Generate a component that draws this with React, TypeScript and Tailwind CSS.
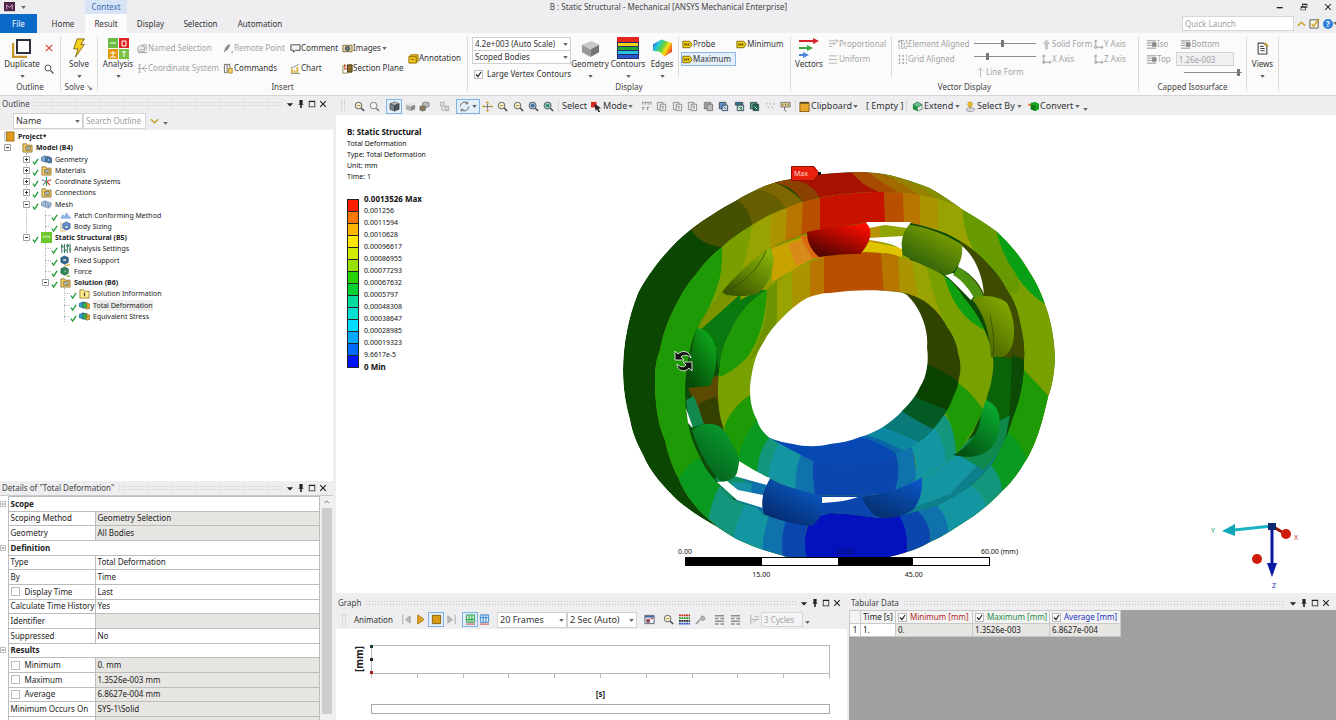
import { useState } from "react";
import type { ReactNode } from "react";
import clsx from "clsx";

const glyphs: Record<string, ReactNode> = {
  namedSelection: (
    <g fill="none" stroke="#9a9a9a">
      <path d="M1 10.5h10M1 5l4-3 3 2v5H1z" />
      <path d="M5 5l2-3h3v6M3 7h4" />
    </g>
  ),
  coordinate: (
    <g stroke="#a8a8a8" fill="none">
      <path d="M3 1v10M1 6h10M6 6l4-4M6 6l4 4" />
      <path d="M1 2h3M1 10h3" strokeDasharray="1 1" />
    </g>
  ),
  remote: (
    <g>
      <path d="M2 9c-1-4 2-7 6-8-1 4-2 7-6 8z" fill="#9c9c9c" />
      <path d="M1 10l6-8" stroke="#777" fill="none" />
      <circle cx="10" cy="10" r="1" fill="#999" />
    </g>
  ),
  commands: (
    <g fill="none" stroke="#666">
      <path d="M1.5 1.5h3v9h-3zM4.5 1.5h3v4" />
      <path d="M6 6h4v5H6z" fill="#f3d773" stroke="#b08b22" />
    </g>
  ),
  comment: <path d="M1 2h10v6H6l-2 2V8H1z" fill="#f4f4f4" stroke="#444" />,
  chart: (
    <g>
      <path d="M1 11V6h2v5zM4 11V8h2v3zM7 11V4h2v7z" fill="#d9b23a" />
      <path d="M1 5l4-1 5-3M1 11.5h10" stroke="#888" fill="none" />
    </g>
  ),
  images: (
    <g>
      <path d="M1 2.5h10v7H1z" fill="#e9dcb0" stroke="#7d6c39" />
      <circle cx="6" cy="6" r="2.4" fill="#6d7a86" stroke="#444" />
    </g>
  ),
  section: (
    <g>
      <path d="M1 3h5v8H1z" fill="#fff" stroke="#884" />
      <path d="M6 2h5v8H6z" fill="#8a6b2c" stroke="#4a3a14" />
      <path d="M3 1v6l3-1" fill="none" stroke="#c22" />
    </g>
  ),
  annotation: (
    <g>
      <path d="M1 4l2-2h8v7l-2 2H1z" fill="#f2c51d" stroke="#8a6a00" />
      <path d="M1 4h8v7M3 7h4" fill="none" stroke="#8a6a00" />
    </g>
  ),
  probe: (
    <g>
      <path d="M1 2.5h7.5l2.5 3.5-2.5 3.5H1z" fill="#f6d313" stroke="#7a6200" />
      <path d="M2.5 6h5.5" stroke="#5f4d00" strokeWidth="2" strokeDasharray="1.5 .5" />
    </g>
  ),
  proportional: <path d="M1 2h10M1 5h7M1 8h4M9 .5l2 1.5-2 1.5M6 4l2 1-2 1" stroke="#b0b0b0" fill="none" />,
  uniform: <path d="M1 2h9M1 6h9M1 10h9" stroke="#b0b0b0" />,
  aligned: (
    <g stroke="#8d8d8d" fill="none">
      <path d="M2 2h9v8H2z" strokeDasharray="2 1.5" />
      <path d="M2 2l5 4M5 1v9M8 4v6" strokeDasharray="2 1" />
    </g>
  ),
  grid: <path d="M2 2h9M2 6h9M2 10h9" stroke="#999" strokeWidth="2" strokeDasharray="1.5 2.5" />,
  solidForm: <path d="M6 1l3 4H7v6H5V5H3z" fill="#d2d2d2" stroke="#bbb" />,
  lineForm: <path d="M6 11V1M3 4l3-3 3 3" stroke="#b8b8b8" fill="none" />,
  axis: (
    <g stroke="#999" fill="none">
      <path d="M3 1v8h8M1.5 3L3 1l1.5 2M9 7.5L11 9 9 10.5" />
      <circle cx="3" cy="9" r="1.3" fill="#ddd" />
    </g>
  ),
  iso: (
    <g stroke="#8a8a8a" fill="none">
      <path d="M1 2h10M1 4.5h5M1 7h5M1 10h10" />
      <path d="M7 4h4v4H7z" fill="#8a8a8a" />
    </g>
  ),
  views: (
    <g fill="none" stroke="#444">
      <path d="M2 1h5l3 3v7H2z" fill="#fff" />
      <path d="M4 4h3M4 6h4M4 8h4" />
      <path d="M8 1l3 3" stroke="#cda434" strokeWidth="2" />
    </g>
  ),
  zoom: (
    <g fill="none">
      <circle cx="5" cy="5" r="3.6" fill="#f7f1d8" stroke="#555" />
      <path d="M3 5h4" stroke="#b48a1b" />
      <path d="M8 8l3 3" stroke="#444" strokeWidth="1.6" />
    </g>
  ),
  zoomPlain: (
    <g fill="none" stroke="#777">
      <circle cx="5" cy="5" r="3.6" fill="#f4f4f4" />
      <path d="M8 8l3 3" strokeWidth="1.5" />
    </g>
  ),
  zoomBlue: (
    <g fill="none">
      <circle cx="5" cy="5" r="3.8" fill="#a9bed0" stroke="#4b5560" />
      <path d="M3 4l2-1 2 1v2L5 7 3 6z" fill="#3d6f9e" />
      <path d="M8 8l3 3" stroke="#444" strokeWidth="1.6" />
    </g>
  ),
  zoomGreen: (
    <g fill="none">
      <circle cx="5" cy="5" r="3.8" fill="#a8cfc0" stroke="#4b5560" />
      <path d="M3 4l2-1 2 1v2L5 7 3 6z" fill="#2b8a78" />
      <path d="M8 8l3 3" stroke="#444" strokeWidth="1.6" />
    </g>
  ),
  cube: (
    <g stroke="#333" strokeWidth=".6">
      <path d="M1 3l5-2 5 2-5 2z" fill="#b9bec2" />
      <path d="M1 3l5 2v6L1 9z" fill="#7c8388" />
      <path d="M11 3L6 5v6l5-2z" fill="#4d5357" />
    </g>
  ),
  cubeGray: (
    <g>
      <path d="M1 4l5-2 5 2-5 2z" fill="#dedede" />
      <path d="M1 4l5 2v5L1 9z" fill="#b0b0b0" />
      <path d="M11 4L6 6v5l5-2z" fill="#8b8b8b" />
    </g>
  ),
  cubes: (
    <g stroke="#555" strokeWidth=".6">
      <path d="M4 2l3-1 4 1v4L8 7 4 6z" fill="#b9b9b9" />
      <path d="M1 6l3-1 3 1v4l-3 1-3-1z" fill="#8b7b55" />
    </g>
  ),
  copyGrid: (
    <g fill="#e4e4e4" stroke="#aaa">
      <path d="M1.5 1.5h4v4h-4zM6.5 5.5h4v5h-4z" />
      <path d="M8.5 6v5M3 6v4h3" fill="none" />
    </g>
  ),
  rotate: (
    <g fill="none" stroke="#7a7a7a" strokeWidth="1.2">
      <path d="M1.5 6A4.5 4.5 0 0 1 9 2.5M10.5 6A4.5 4.5 0 0 1 3 9.5" />
      <path d="M9.5.5v2.500H7M2.500 11.500V9H5" />
    </g>
  ),
  pan: (
    <g fill="#c79a1d">
      <path d="M6 0l2 2.500H4zM6 12l2-2.500H4zM0 6l2.500-2v4zM12 6L9.500 4v4z" />
      <path d="M5.500 3h1v6h-1zM3 5.500h6v1H3z" fill="#777" />
    </g>
  ),
  cursorRed: (
    <g>
      <path d="M0 1h6v6H0z" fill="#d9261c" />
      <path d="M4 3l7 5-3 .5L10 12 8 12 6.500 9 5 11z" fill="#222" />
    </g>
  ),
  filter: (
    <path
      d="M1 1.5h10M2 1v4M5 1v4M8 1v3M11 1v4M1 7h4M2 7v4M6 7h3M7 7v4"
      strokeDasharray="3 1"
      fill="none"
      stroke="#8f8f8f"
    />
  ),
  pick: (
    <g fill="#eee" stroke="#8a8a8a">
      <path d="M1.5 1.5h6v8h-6z" />
      <path d="M4.5 3.5h6v7h-6z" />
      <path d="M6 5l2 4M8 5v2" fill="none" />
    </g>
  ),
  pickGray: (
    <g fill="#a6a6a6" stroke="#777">
      <path d="M1.5 1.5h7v7h-7z" />
      <path d="M4.5 3.5h6v7h-6z" fill="#bcbcbc" />
    </g>
  ),
  pickBlue: (
    <g stroke="#3a4a5a">
      <path d="M1.5 1.5h7v7h-7z" fill="#5b94d0" />
      <path d="M4.5 4.5h6v6h-6z" fill="#d0e0ee" />
      <path d="M6 6l3 3" />
    </g>
  ),
  pickTeal: (
    <g stroke="#3a4a5a">
      <path d="M1.5 1.5h8v3h-8z" fill="#2f6f9c" />
      <path d="M3.5 4.5h7v6h-7z" fill="#cfe6d8" />
      <path d="M5 6l3 3M8 6v4" stroke="#18794e" />
    </g>
  ),
  pickGreen: (
    <g stroke="#3a4a4a">
      <path d="M1.5 1.5h7v7h-7z" fill="#4f9e88" />
      <path d="M4.5 3.5h6v7h-6z" fill="#17694d" />
      <path d="M6 6l3 3" stroke="#cfe" />
    </g>
  ),
  dots: <path d="M1 3h10M3 7h7" stroke="#c2c2c2" strokeWidth="2" strokeDasharray="1.5 2.5" />,
  tagFlag: (
    <g>
      <path d="M1 1.5h10v5H1z" fill="#e3cf84" stroke="#777" />
      <path d="M5 6.5v3l2 2M3 3v2M6 3v2M9 3v2" stroke="#555" fill="none" />
    </g>
  ),
  clipboard: (
    <g>
      <path d="M1 1.5h10v10H1z" fill="#e7a92c" stroke="#8c5a10" />
      <path d="M1.5 1h9v2h-9z" fill="#5a4a2a" />
    </g>
  ),
  extend: (
    <g>
      <path d="M1 4l5-3 5 3-5 3z" fill="#6ac28c" stroke="#1c5c39" strokeWidth=".7" />
      <path d="M1 4l5 3v4L1 9z" fill="#1c8c3f" />
      <path d="M11 4L6 7v4l5-2z" fill="#e5efe8" stroke="#2f6d49" strokeWidth=".7" />
    </g>
  ),
  selectBy: (
    <g>
      <path d="M1 9l4-3 6 3-3 2.5H3z" fill="#d5d8dc" stroke="#888" strokeWidth=".7" />
      <circle cx="5.5" cy="3.5" r="2.5" fill="#f2c22c" stroke="#b8860b" strokeWidth=".7" />
      <path d="M5.5 6v3" stroke="#b8860b" />
    </g>
  ),
  convert: (
    <g>
      <path d="M0 3h6v2H0z" fill="#e07b2a" />
      <path d="M3 2l5-1 4 2v6l-4 2-5-2z" fill="#17a321" />
      <path d="M3 4l5 1v6l-5-2z" fill="#0d7a17" />
    </g>
  ),
  folder: (
    <g stroke="#7d6323" strokeWidth=".8">
      <path d="M1 2h4l1 1.5h5V11H1z" fill="#f3cf62" />
      <path d="M4 5h5v4H4z" fill="#b8c8d8" />
      <path d="M5 6l3 3" />
    </g>
  ),
  folderInfo: (
    <g stroke="#8b7020" strokeWidth=".8">
      <path d="M1 2h4l1 1.5h5V11H1z" fill="#ffe98a" />
      <path d="M6 5v4" stroke="#333" strokeWidth="1.2" />
    </g>
  ),
  book: (
    <g>
      <path d="M1 1h2v10H1z" fill="#fff" stroke="#777" strokeWidth=".6" />
      <path d="M3 1h8v10H3z" fill="#e09a1a" stroke="#93600c" strokeWidth=".8" />
    </g>
  ),
  bodyBlue: (
    <g stroke="#33587e" strokeWidth=".7">
      <path d="M0 4l4-2 4 1v4L5 9 0 7z" fill="#7fa9d4" />
      <path d="M5 4l4-1 3 2v4l-3 1-4-2z" fill="#4678ae" />
      <circle cx="8.5" cy="6.5" r="1.3" fill="#d8e6f2" />
    </g>
  ),
  bodyMesh: (
    <g stroke="#5a78a0" strokeWidth=".6">
      <path d="M0 4l4-2 7 2v4L8 10 0 7z" fill="#b7cce6" />
      <path d="M2 3l6 2v5M5 2.5v6M0 5.5l8 2 3-2" fill="none" />
    </g>
  ),
  axesStar: (
    <g strokeWidth="1.2">
      <path d="M6 6V1" stroke="#1c9e96" />
      <path d="M6 6l5-2M6 6l4 4" stroke="#d23b2c" />
      <path d="M6 6L1 4M6 6l-4 4" stroke="#6a7fa0" />
      <path d="M6 6v5" stroke="#2aa43b" />
    </g>
  ),
  patch: <path d="M1 9l2-4 2 2 2-4 2 3 3 3z" fill="#8fb6ee" stroke="#6c95d8" strokeWidth=".6" />,
  sizing: (
    <g stroke="#2b4c82" strokeWidth=".7">
      <path d="M3 3l4-2 4 2v5L7 10 3 8z" fill="#6c93d6" />
      <path d="M1 1v10h5" fill="none" stroke="#c9991d" />
      <path d="M5 5h4v3H5z" fill="#dfe8fa" />
    </g>
  ),
  structural: (
    <g>
      <path d="M0 0h12v12H0z" fill="#6cc72b" />
      <path d="M2 5h8" stroke="#d9f2c2" strokeWidth="2" strokeDasharray="2 1" />
    </g>
  ),
  settings: (
    <g stroke="#355" fill="none">
      <path d="M2 1v10M5 1v10M8 1v10M11 1v10" />
      <path d="M1 4h3M4 8h3M7 3h3M10 7h2" stroke="#2a9455" strokeWidth="2" />
    </g>
  ),
  support: (
    <g stroke="#1f3d55" strokeWidth=".7">
      <path d="M1 3l4-2 4 2v5L5 10 1 8z" fill="#2b6da3" />
      <path d="M3 4h4v3H3z" fill="#cfe0ee" />
      <path d="M5 11.5l6-1" stroke="#d2a622" strokeWidth="1.2" />
    </g>
  ),
  force: (
    <g stroke="#1f4d35" strokeWidth=".7">
      <path d="M1 3l4-2 4 2v5L5 10 1 8z" fill="#2c8c5a" />
      <path d="M4 4l3 1v3" fill="#d6efe0" />
      <path d="M7 11h4" stroke="#4cb31e" strokeWidth="1.2" />
    </g>
  ),
  result: (
    <g stroke="#27506a" strokeWidth=".6">
      <path d="M0 4l4-2 4 1v4L5 9 0 7z" fill="#2aa0d0" />
      <path d="M5 3l4 0 3 2v4l-3 1-4-2z" fill="#f0a321" />
      <path d="M4 4l3-1 2 3-2 3-3-1z" fill="#35b53a" />
    </g>
  ),
  first: <path d="M2 1v10M10 2L5 6l5 4z" fill="#b9b9b9" stroke="#a5a5a5" />,
  play: <path d="M3 1l7 5-7 5z" fill="#e3a41b" stroke="#a9770c" />,
  stop: <path d="M1.5 1.5h9v9h-9z" fill="#d89c16" stroke="#85600c" />,
  last: <path d="M2 2l5 4-5 4zM10 1v10" fill="#b9b9b9" stroke="#a5a5a5" />,
  distributed: (
    <g fill="none">
      <path d="M1.5 1h9v8h-9z" fill="#c9f0cd" stroke="#2a9a4c" />
      <path d="M4.5 1v8M7.5 1v8M1 6h9" stroke="#2a9a4c" />
      <path d="M1 11h10" stroke="#c33" />
    </g>
  ),
  resultSets: (
    <g fill="none">
      <path d="M1.5 1h9v8h-9z" fill="#d8ebfa" stroke="#3a86c8" />
      <path d="M4.5 1v8M7.5 1v8M1 4h9" stroke="#3a86c8" />
      <path d="M1 11h10" stroke="#c33" />
    </g>
  ),
  exportVideo: (
    <g>
      <path d="M1 1.5h10v9H1z" fill="#f2f5f8" stroke="#4b5a72" />
      <path d="M1 2h10v2H1z" fill="#4b6ea5" />
      <path d="M3 6h3v3H3zM7 5h3" fill="#4b6ea5" stroke="#b33" />
    </g>
  ),
  palette: (
    <g strokeWidth="2" strokeDasharray="2 .6">
      <path d="M0 1.5h12" stroke="#c8241a" />
      <path d="M0 4.5h12" stroke="#2c9a2c" />
      <path d="M0 7.5h12" stroke="#222" />
      <path d="M0 10.5h12" stroke="#2b51c8" />
    </g>
  ),
  magicTool: <path d="M1 10l5-5 1-3 3 1 1 3-3 1-2-1-4 5z" fill="#b5b5b5" stroke="#999" />,
  rows: <path d="M1 2h10M1 5h4M7 5h4M1 8h10M1 11h4M7 11h4" stroke="#8d8d8d" strokeWidth="1.6" />,
  cycles: <path d="M2 1v10M2 6h9M6 3h5M5 9l3-3" stroke="#b0b0b0" fill="none" />,
  pencilNote: (
    <g fill="none">
      <path d="M1 2h9v9H1z" fill="#f8f3dc" stroke="#555" />
      <path d="M3 7l2 2 6-8" stroke="#c99d1c" strokeWidth="1.5" />
    </g>
  ),
};

const Icon = ({ name, className = "size-[11px]" }: { name: string; className?: string }) => (
  <svg viewBox="0 0 12 12" aria-hidden="true" className={clsx("shrink-0", className)}>
    {glyphs[name]}
  </svg>
);

const Caret = ({ className = "" }: { className?: string }) => (
  <svg viewBox="0 0 6 4" aria-hidden="true" className={clsx("h-[3px] w-[5px] shrink-0", className)}>
    <path d="M0 0h6L3 4z" fill="#666" />
  </svg>
);

const Divider = ({ className = "h-[54px]" }: { className?: string }) => (
  <div className={clsx("w-px shrink-0 bg-[#d9d9d9]", className)} />
);

const CheckBox = ({ checked = false }: { checked?: boolean }) => (
  <span className="relative flex shrink-0">
    <input
      type="checkbox"
      defaultChecked={checked}
      className="peer size-[9px] appearance-none border border-[#bdbdbd] bg-white"
    />
    <svg viewBox="0 0 9 9" className="pointer-events-none absolute inset-0 hidden size-[9px] peer-checked:block">
      <path d="M2 4.500l2 2 3-4.500" fill="none" stroke="#222" strokeWidth="1.200" />
    </svg>
  </span>
);

interface ToolProps {
  icon: string;
  label: string;
  disabled?: boolean;
  caret?: boolean;
  active?: boolean;
}

const Tool = ({ icon, label, disabled, caret, active }: ToolProps) => (
  <button
    type="button"
    disabled={disabled}
    className={clsx(
      "flex h-[14px] items-center whitespace-nowrap border pr-1 text-left",
      active ? "border-[#8db8e6] bg-[#e3effb]" : "border-transparent",
      disabled ? "text-[#a3a3a3]" : "text-[#333]"
    )}
  >
    <Icon name={icon} />
    {label}
    {caret && <Caret className="ml-px" />}
  </button>
);

interface BigToolProps {
  label: string;
  children: ReactNode;
  caret?: boolean;
  className?: string;
}

const BigTool = ({ label, children, caret = true, className = "w-9" }: BigToolProps) => (
  <button type="button" className={clsx("flex shrink-0 flex-col items-center text-[#333]", className)}>
    <span className="flex h-[22px] items-center">{children}</span>
    <span className="leading-[10px]">{label}</span>
    {caret && <Caret className="mt-1.5" />}
  </button>
);

const Group = ({ label, className, children }: { label: string; className: string; children: ReactNode }) => (
  <div className={clsx("flex shrink-0 flex-col", className)}>
    <div className="flex h-11 items-start">{children}</div>
    <div className="text-center leading-[12px] text-[#444]">{label}</div>
  </div>
);

const Dropdown = ({ label, options, className }: { label: string; options: string[]; className?: string }) => (
  <div className={clsx("relative border border-[#d0d0d0] bg-white", className)}>
    <select
      aria-label={label}
      className="block size-full appearance-none bg-transparent pl-0.5 pr-2 text-[#333] outline-none"
    >
      {options.map((o) => (
        <option key={o}>{o}</option>
      ))}
    </select>
    <Caret className="pointer-events-none absolute right-0.5 top-1/2 -mt-px" />
  </div>
);

const Slider = ({ label, value }: { label: string; value: number }) => (
  <input
    type="range"
    aria-label={label}
    defaultValue={value}
    className="h-[9px] w-full appearance-none bg-[linear-gradient(#8c8c8c,#8c8c8c)] bg-[length:100%_1px] bg-center bg-no-repeat [&::-webkit-slider-thumb]:h-[7px] [&::-webkit-slider-thumb]:w-[3px] [&::-webkit-slider-thumb]:appearance-none [&::-webkit-slider-thumb]:bg-[#777]"
  />
);

const TitleBar = () => (
  <header className="flex h-[14px] items-stretch text-[#444]">
    <div className="flex w-[85px] items-center gap-1.5 pl-1">
      <svg viewBox="0 0 12 12" className="size-[11px]" aria-hidden="true">
        <path d="M0 0h12v10H0z" fill="#4a2347" />
        <path d="M3 8V3l3 3 3-3v5" fill="none" stroke="#e3a9d8" />
      </svg>
      <Caret />
    </div>
    <div className="flex w-[42px] items-center justify-center bg-[#d6e4f5] text-[#3f6fb0]">Context</div>
    <h1 className="flex-1 pr-[66px] text-center leading-[13px]">
      B : Static Structural - Mechanical [ANSYS Mechanical Enterprise]
    </h1>
    <div className="flex w-[60px] items-center justify-between pr-1">
      {[
        ["Minimize", "M1 6h9v2H1z"],
        ["Restore", "M3 1h8v6H9v4H1V5h2zM4 5h5v1h1V3H4zM2 7h6v3H2z"],
        ["Close", "M1 2l1-1 4 4 4-4 1 1-4 4 4 4-1 1-4-4-4 4-1-1 4-4z"],
      ].map(([name, d]) => (
        <button key={name} type="button" aria-label={name}>
          <svg viewBox="0 0 12 12" className="size-2">
            <path d={d} fill="#222" fillRule="evenodd" />
          </svg>
        </button>
      ))}
    </div>
  </header>
);

const tabs = [
  { name: "Home", width: "w-[48px] pl-1" },
  { name: "Result", width: "w-[42px]" },
  { name: "Display", width: "w-[47px]" },
  { name: "Selection", width: "w-[53px]" },
  { name: "Automation", width: "w-[66px]" },
];

const TabBar = () => {
  const [current, setCurrent] = useState("Result");
  return (
    <nav className="flex h-[19px] items-stretch text-[#333]">
      <button type="button" className="w-[37px] bg-[#0b6ac8] text-white">
        File
      </button>
      {tabs.map((tab) => (
        <button
          key={tab.name}
          type="button"
          onClick={() => setCurrent(tab.name)}
          className={clsx("text-center", tab.width, current === tab.name && "bg-[#fbfbfb]")}
        >
          {tab.name}
        </button>
      ))}
      <div className="ml-auto flex items-center gap-[3px]">
        <input
          aria-label="Quick Launch"
          placeholder="Quick Launch"
          className="h-[15px] w-[112px] border border-[#d6d6d6] bg-white pl-0.5 outline-none placeholder:text-[#a0a0a0]"
        />
        <button type="button" aria-label="Collapse ribbon">
          <svg viewBox="0 0 10 6" className="h-[6px] w-[9px]">
            <path d="M1 5l4-4 4 4" fill="none" stroke="#c9a227" strokeWidth="1.600" />
          </svg>
        </button>
        <button type="button" aria-label="Options">
          <Icon name="pencilNote" />
        </button>
        <button type="button" aria-label="Help" className="flex items-center">
          <span className="size-[10px] rounded-full bg-[#2f7fd6] text-center font-bold leading-[10px] text-white">?</span>
          <Caret className="-mr-0.5" />
        </button>
      </div>
    </nav>
  );
};

const Ribbon = () => (
  <section className="flex h-[63px] items-start border-b border-[#d5d5d5] bg-[#fbfbfb] pt-1">
    <Group label="Outline" className="w-[60px]">
      <div className="pl-1">
        <BigTool label="Duplicate">
          <svg viewBox="0 0 20 20" className="size-5">
            <path d="M1 5v14h14" fill="none" stroke="#c9962b" strokeWidth="2.500" />
            <path d="M5 2h13v13H5z" fill="#fff" stroke="#2d2f3a" strokeWidth="2" />
          </svg>
        </BigTool>
      </div>
      <div className="flex flex-col items-center gap-3 pl-1 pt-[7px]">
        <button type="button" aria-label="Delete">
          <svg viewBox="0 0 10 10" className="size-2">
            <path d="M1 1l8 8M9 1L1 9" stroke="#d8412f" strokeWidth="1.500" />
          </svg>
        </button>
        <button type="button" aria-label="Find">
          <svg viewBox="0 0 10 10" className="size-[10px]">
            <circle cx="4" cy="4" r="3" fill="none" stroke="#555" />
            <path d="M6.500 6.500l3 3" stroke="#555" strokeWidth="1.300" />
          </svg>
        </button>
      </div>
    </Group>
    <Divider />
    <Group label="Solve ↘" className="w-9">
      <BigTool label="Solve">
        <svg viewBox="0 0 16 22" className="h-5 w-4">
          <path d="M6 1h8l-4 6h4L4 21l3-9H2z" fill="#f5cd1b" stroke="#7e6a12" />
        </svg>
      </BigTool>
    </Group>
    <Divider />
    <Group label="Insert" className="w-[369px]">
      <div className="w-[38px] pl-0.5">
        <BigTool label="Analysis">
          <svg viewBox="0 0 21 21" className="size-[21px]">
            <path d="M0 0h10v10H0z" fill="#6cbb45" />
            <path d="M11 0h10v10H11z" fill="#df2320" />
            <path d="M0 11h10v10H0z" fill="#e3970f" />
            <path d="M11 11h10v10H11z" fill="#7cc142" />
            <path d="M2 5h6M14 3h4v5h-4zM2 15h6M5 13v6M2 19h6M16 13v6M14 14h4" fill="none" stroke="#fff" />
          </svg>
        </BigTool>
      </div>
      <div className="flex w-[86px] flex-col gap-1.5 pt-1">
        <Tool icon="namedSelection" label="Named Selection" disabled />
        <Tool icon="coordinate" label="Coordinate System" disabled />
      </div>
      <div className="flex w-[67px] flex-col gap-1.5 pt-1">
        <Tool icon="remote" label="Remote Point" disabled />
        <Tool icon="commands" label="Commands" />
      </div>
      <div className="flex w-[52px] flex-col gap-1.5 pt-1">
        <Tool icon="comment" label="Comment" />
        <Tool icon="chart" label="Chart" />
      </div>
      <div className="flex w-[66px] flex-col gap-1.5 pt-1">
        <Tool icon="images" label="Images" caret />
        <Tool icon="section" label="Section Plane" />
      </div>
      <div className="pt-[14px]">
        <Tool icon="annotation" label="Annotation" />
      </div>
    </Group>
    <Divider />
    <Group label="Display" className="w-[322px]">
      <div className="flex w-[103px] shrink-0 flex-col pl-1">
        <Dropdown label="Scale" options={["4.2e+003 (Auto Scale)"]} className="h-[14px]" />
        <Dropdown label="Geometry scope" options={["Scoped Bodies"]} className="-mt-px h-[14px]" />
        <label className="mt-1 flex items-center gap-1 whitespace-nowrap pl-0.5 leading-[12px] text-[#333]">
          <CheckBox checked />
          Large Vertex Contours
        </label>
      </div>
      <BigTool label="Geometry" className="w-[38px]">
        <svg viewBox="0 0 20 20" className="size-[19px]">
          <path d="M1 6l10-4 8 4-9 5z" fill="#c9c9c9" />
          <path d="M1 6l9 5v8L1 14z" fill="#989898" />
          <path d="M19 6l-9 5v8l9-5z" fill="#757575" />
        </svg>
      </BigTool>
      <BigTool label="Contours" className="w-[38px]">
        <svg viewBox="0 0 22 22" className="size-[22px]">
          <path d="M0 0h22v22H0z" fill="#222d70" />
          <path d="M0 0h22v5H0z" fill="#e0281c" />
          <path d="M1 6h20v3H1z" fill="#f5d313" />
          <path d="M1 10h20v3H1z" fill="#24a52a" />
          <path d="M1 14h20v3H1z" fill="#25c2dc" />
          <path d="M1 18h20v3H1z" fill="#2d55c8" />
        </svg>
      </BigTool>
      <BigTool label="Edges" className="w-[30px]">
        <svg viewBox="0 0 22 20" className="h-5 w-[21px]">
          <defs>
            <linearGradient id="edges" x1="0" y1=".2" x2="1" y2=".7">
              <stop offset="0" stopColor="#2a62e0" />
              <stop offset=".25" stopColor="#25c8d8" />
              <stop offset=".5" stopColor="#5fd23a" />
              <stop offset=".7" stopColor="#f7e017" />
              <stop offset="1" stopColor="#ec2b1c" />
            </linearGradient>
          </defs>
          <path d="M1 6l9-5 11 4v9l-8 5L8 14l-7-1z" fill="url(#edges)" />
        </svg>
      </BigTool>
      <Divider className="ml-px h-10" />
      <div className="flex flex-col items-start gap-px pl-0.5">
        <div className="flex gap-[15px]">
          <Tool icon="probe" label="Probe" />
          <Tool icon="probe" label="Minimum" />
        </div>
        <Tool icon="probe" label="Maximum" active />
      </div>
    </Group>
    <Divider />
    <Group label="Vector Display" className="w-[347px]">
      <BigTool label="Vectors" caret={false}>
        <svg viewBox="0 0 20 20" className="size-5">
          <path d="M0 2h14V0l6 3-6 3V4H0z" fill="#d8232c" />
          <path d="M0 9h8V7l6 3-6 3v-2H0z" fill="#35a843" />
          <path d="M0 16h4v-2l6 3-6 3v-2H0z" fill="#4c86dc" />
        </svg>
      </BigTool>
      <div className="flex w-16 flex-col gap-px">
        <Tool icon="proportional" label="Proportional" disabled />
        <Tool icon="uniform" label="Uniform" disabled />
      </div>
      <Divider className="h-10" />
      <div className="flex w-[82px] flex-col gap-px pl-1">
        <Tool icon="aligned" label="Element Aligned" disabled />
        <Tool icon="grid" label="Grid Aligned" disabled />
      </div>
      <div className="flex w-[62px] flex-col gap-1 pt-0.5">
        <Slider label="Vector length" value={46} />
        <Slider label="Vector density" value={20} />
        <Tool icon="lineForm" label="Line Form" disabled />
      </div>
      <div className="flex w-14 flex-col gap-px pl-1">
        <Tool icon="solidForm" label="Solid Form" disabled />
        <Tool icon="axis" label="X Axis" disabled />
      </div>
      <div className="flex flex-col gap-px">
        <Tool icon="axis" label="Y Axis" disabled />
        <Tool icon="axis" label="Z Axis" disabled />
      </div>
    </Group>
    <Divider />
    <Group label="Capped Isosurface" className="w-[107px]">
      <div className="flex w-full flex-col pl-1.5">
        <div className="flex gap-1.5">
          <Tool icon="iso" label="Iso" disabled />
          <Tool icon="iso" label="Bottom" disabled />
        </div>
        <div className="mt-px flex items-center">
          <Tool icon="iso" label="Top" disabled />
          <input
            aria-label="Isosurface value"
            defaultValue="1.26e-003"
            disabled
            className="h-[14px] w-[58px] border border-[#d2d2d2] bg-[#f0f0f2] pl-0.5 text-[#a3a3a3]"
          />
        </div>
        <div className="flex w-[62px] self-end pr-1 pt-0.5">
          <Slider label="Isosurface" value={97} />
        </div>
      </div>
    </Group>
    <Divider />
    <div className="flex w-[31px] justify-center">
      <BigTool label="Views">
        <Icon name="views" className="size-[13px]" />
      </BigTool>
    </div>
    <Divider />
  </section>
);

const PanelHeader = ({ title }: { title: string }) => (
  <div className="flex h-[14px] shrink-0 items-center gap-1 bg-[#eeeef1] pl-0.5 pr-1.5 text-[#444]">
    <h2 className="whitespace-nowrap">{title}</h2>
    <div className="h-1.5 min-w-0 flex-1 bg-[radial-gradient(#c4c4c8_1px,transparent_1px)] bg-[length:3px_3px]" />
    <div className="flex items-center gap-[3px]">
      {[
        ["Menu", "M1 4h8L5 8z"],
        ["Pin", "M3 0h4v5h1v1H6v4H4V6H2V5h1z"],
        ["Maximize", "M1 1h8v8H1zM2 2.500v5.500h6V2.500z"],
        ["Close panel", "M1 2l1-1 3 3 3-3 1 1-3 3 3 3-1 1-3-3-3 3-1-1 3-3z"],
      ].map(([name, d]) => (
        <button key={name} type="button" aria-label={name}>
          <svg viewBox="0 0 10 10" className="size-2">
            <path d={d} fill="#222" fillRule="evenodd" />
          </svg>
        </button>
      ))}
    </div>
  </div>
);

interface TreeNode {
  label: string;
  level: number;
  icon: string;
  guides: number[];
  expander?: "+" | "-";
  bold?: boolean;
  selected?: boolean;
}

const tree: TreeNode[] = [
  { label: "Project*", level: 0, icon: "book", guides: [], bold: true },
  { label: "Model (B4)", level: 1, icon: "folder", guides: [], expander: "-", bold: true },
  { label: "Geometry", level: 2, icon: "bodyBlue", guides: [2], expander: "+" },
  { label: "Materials", level: 2, icon: "folder", guides: [2], expander: "+" },
  { label: "Coordinate Systems", level: 2, icon: "axesStar", guides: [2], expander: "+" },
  { label: "Connections", level: 2, icon: "folder", guides: [2], expander: "+" },
  { label: "Mesh", level: 2, icon: "bodyMesh", guides: [2], expander: "-" },
  { label: "Patch Conforming Method", level: 3, icon: "patch", guides: [2, 3] },
  { label: "Body Sizing", level: 3, icon: "sizing", guides: [2, 3] },
  { label: "Static Structural (B5)", level: 2, icon: "structural", guides: [2], expander: "-", bold: true },
  { label: "Analysis Settings", level: 3, icon: "settings", guides: [3] },
  { label: "Fixed Support", level: 3, icon: "support", guides: [3] },
  { label: "Force", level: 3, icon: "force", guides: [3] },
  { label: "Solution (B6)", level: 3, icon: "folder", guides: [3], expander: "-", bold: true },
  { label: "Solution Information", level: 4, icon: "folderInfo", guides: [4] },
  { label: "Total Deformation", level: 4, icon: "result", guides: [4], selected: true },
  { label: "Equivalent Stress", level: 4, icon: "result", guides: [4] },
];

const TreeRow = ({ node }: { node: TreeNode }) => (
  <li
    className="relative flex items-center"
    style={{ paddingLeft: node.level === 0 ? 4 : node.level * 19 - 16 }}
  >
    {node.guides.map((g) => (
      <span
        key={g}
        className="absolute inset-y-0 w-px border-l border-dotted border-[#bdbdbd]"
        style={{ left: g * 19 - 12 }}
      />
    ))}
    {node.level > 0 && (
      <>
        <span className="relative flex w-[10px] shrink-0 items-center">
          {node.expander ? (
            <svg viewBox="0 0 7 7" className="ml-px size-[7px]">
              <path d="M.5.5h6v6h-6z" fill="#fff" stroke="#a0a0a0" />
              <path d={node.expander === "+" ? "M2 3.500h3M3.500 2v3" : "M2 3.500h3"} stroke="#333" />
            </svg>
          ) : (
            <span className="ml-1 w-1.5 border-t border-dotted border-[#bdbdbd]" />
          )}
        </span>
        <span className="w-[9px] shrink-0">
          {node.level > 1 && (
            <svg viewBox="0 0 8 8" className="mt-1 size-[7px]">
              <path d="M1 4l2 3 4-6" fill="none" stroke="#1f9a35" strokeWidth="1.500" />
            </svg>
          )}
        </span>
      </>
    )}
    <Icon name={node.icon} className="size-[11px]" />
    <span
      className={clsx(
        "ml-[3px] whitespace-nowrap leading-[11px]",
        node.bold && "font-bold",
        node.selected && "bg-[#ededed]"
      )}
    >
      {node.label}
    </span>
  </li>
);

const OutlinePanel = () => (
  <section className="flex min-h-0 flex-1 flex-col bg-white">
    <PanelHeader title="Outline" />
    <div className="flex h-[19px] shrink-0 items-center bg-[#eeeef1] pl-[13px]">
      <Dropdown label="Filter by" options={["Name", "Type", "Tag"]} className="h-4 w-[70px] text-[9px]" />
      <input
        aria-label="Search Outline"
        placeholder="Search Outline"
        className="h-4 w-[63px] border border-[#d6d6d6] bg-white pl-0.5 outline-none placeholder:text-[#a0a0a0]"
      />
      <button type="button" aria-label="Next match" className="ml-1">
        <svg viewBox="0 0 10 6" className="h-[6px] w-[9px]">
          <path d="M1 1l4 4 4-4" fill="none" stroke="#c9a227" strokeWidth="1.600" />
        </svg>
      </button>
      <Caret className="ml-1 mt-1.5" />
    </div>
    <ul className="grid h-[192px] auto-rows-fr pt-px text-[7px] text-[#222]">
      {tree.map((node) => (
        <TreeRow key={node.label} node={node} />
      ))}
    </ul>
  </section>
);

interface DetailRow {
  name: string;
  value?: string;
  heading?: boolean;
  check?: boolean;
  readOnly?: boolean;
}

const details: DetailRow[] = [
  { name: "Scope", heading: true },
  { name: "Scoping Method", value: "Geometry Selection", readOnly: true },
  { name: "Geometry", value: "All Bodies", readOnly: true },
  { name: "Definition", heading: true },
  { name: "Type", value: "Total Deformation" },
  { name: "By", value: "Time" },
  { name: "Display Time", value: "Last", check: true },
  { name: "Calculate Time History", value: "Yes" },
  { name: "Identifier", value: "", readOnly: true },
  { name: "Suppressed", value: "No" },
  { name: "Results", heading: true },
  { name: "Minimum", value: "0. mm", check: true, readOnly: true },
  { name: "Maximum", value: "1.3526e-003 mm", check: true, readOnly: true },
  { name: "Average", value: "6.8627e-004 mm", check: true, readOnly: true },
  { name: "Minimum Occurs On", value: "SYS-1\\Solid", readOnly: true },
];

const DetailsPanel = () => (
  <section className="flex h-[239px] shrink-0 flex-col overflow-hidden bg-white">
    <PanelHeader title={'Details of "Total Deformation"'} />
    <div className="flex min-h-0 flex-1 items-stretch border-t border-[#c8c8c8]">
      <div className="flex-1">
        <table className="h-[221px] w-full table-fixed border-collapse text-[#222]">
          <colgroup>
            <col className="w-2" />
            <col className="w-[87px]" />
            <col />
          </colgroup>
          <tbody>
            {details.map((row) => (
              <tr key={row.name}>
                <td className="p-0">
                  {row.heading && (
                    <svg viewBox="0 0 7 7" className="size-[6px]">
                      <path d="M.5.5h6v6h-6z" fill="#fff" stroke="#aaa" />
                      <path d="M2 3.500h3" stroke="#444" />
                    </svg>
                  )}
                </td>
                {row.heading ? (
                  <th colSpan={2} className="border border-[#bcbcbc] py-0 pl-0.5 text-left font-bold">
                    {row.name}
                  </th>
                ) : (
                  <>
                    <td className="whitespace-nowrap border border-[#bcbcbc] py-0 pl-0.5 pr-0">
                      {row.check ? (
                        <label className="flex items-center gap-[5px]">
                          <CheckBox />
                          {row.name}
                        </label>
                      ) : (
                        row.name
                      )}
                    </td>
                    <td className={clsx("border border-[#bcbcbc] py-0 pl-0.5", row.readOnly && "bg-[#e7e6e3]")}>
                      {row.value}
                    </td>
                  </>
                )}
              </tr>
            ))}
          </tbody>
        </table>
        <div className="ml-2 flex h-1 border-x border-[#bcbcbc]">
          <div className="w-[87px] border-r border-[#bcbcbc]" />
          <div className="flex-1 bg-[#e7e6e3]" />
        </div>
      </div>
      <div className="flex w-[13px] flex-col items-center bg-[#f0f0f0] pt-1">
        <svg viewBox="0 0 8 5" className="h-1 w-1.5">
          <path d="M1 4l3-3 3 3" fill="none" stroke="#555" />
        </svg>
        <div className="mb-1.5 mt-1 w-[10px] flex-1 bg-[#cdcdcd]" />
      </div>
    </div>
  </section>
);

const IconButton = ({ icon, label, active }: { icon: string; label: string; active?: boolean }) => (
  <button
    type="button"
    aria-label={label}
    className={clsx(
      "flex h-[15px] items-center justify-center border",
      active ? "w-4 border-[#7fb2e5] bg-[#e3effb]" : "w-[13px] border-transparent"
    )}
  >
    <Icon name={icon} />
  </button>
);

const pickers = [
  "filter", "pick", "pick", "pick", "pickGray", "pickBlue", "pickTeal", "pickGreen", "dots", "tagFlag",
];

const ViewToolbar = () => (
  <div className="flex h-[18px] shrink-0 items-center bg-[#eeeef1] text-[9px] text-[#333]">
    <div className="ml-[5px] mr-2 h-3 w-1 border-x border-dotted border-[#c4c4c4]" />
    <div className="flex w-[28px] justify-between">
      <IconButton icon="zoom" label="Zoom in" />
      <IconButton icon="zoomPlain" label="Zoom out" />
    </div>
    <div className="ml-[5px] flex w-[45px] items-center justify-between">
      <IconButton icon="cube" label="Shaded exterior and edges" active />
      <IconButton icon="cubeGray" label="Shaded exterior" />
      <IconButton icon="cubes" label="Wireframe" />
    </div>
    <div className="ml-[7px]">
      <IconButton icon="copyGrid" label="Show mesh" />
    </div>
    <button
      type="button"
      aria-label="Rotate"
      className="ml-[5px] flex h-[15px] w-6 items-center justify-between border border-[#7fb2e5] bg-[#e3effb] px-0.5"
    >
      <Icon name="rotate" />
      <Caret />
    </button>
    <div className="ml-px flex w-[74px] items-center justify-between">
      <IconButton icon="pan" label="Pan" />
      <IconButton icon="zoom" label="Zoom" />
      <IconButton icon="zoom" label="Box zoom" />
      <IconButton icon="zoomBlue" label="Fit" />
      <IconButton icon="zoomGreen" label="Magnifier" />
    </div>
    <Divider className="mx-[3px] h-3" />
    <span className="w-[29px]">Select</span>
    <button type="button" className="flex w-[49px] items-center gap-px">
      <Icon name="cursorRed" />
      Mode
      <Caret />
    </button>
    <div className="flex w-[152px] justify-between">
      {pickers.map((p, i) => (
        <IconButton key={i} icon={p} label={`Selection filter ${i + 1}`} />
      ))}
    </div>
    <Divider className="mx-[3px] h-3" />
    <button type="button" className="flex w-[67px] items-center gap-px whitespace-nowrap">
      <Icon name="clipboard" />
      Clipboard
      <Caret />
    </button>
    <span className="w-[37px] whitespace-nowrap">[ Empty ]</span>
    <Divider className="ml-[3px] mr-[5px] h-3" />
    {[
      { icon: "extend", label: "Extend", width: "w-[53px]" },
      { icon: "selectBy", label: "Select By", width: "w-[63px]" },
      { icon: "convert", label: "Convert", width: "w-[55px]" },
    ].map((b) => (
      <button key={b.label} type="button" className={clsx("flex items-center gap-px whitespace-nowrap", b.width)}>
        <Icon name={b.icon} />
        {b.label}
        <Caret className="ml-px" />
      </button>
    ))}
    <Caret className="mt-1.5" />
  </div>
);

const legend = [
  { label: "0.0013526 Max", color: "#ff1e00" },
  { label: "0.001256", color: "#ff7800" },
  { label: "0.0011594", color: "#ffb400" },
  { label: "0.0010628", color: "#ffe600" },
  { label: "0.00096617", color: "#d2eb00" },
  { label: "0.00086955", color: "#96e100" },
  { label: "0.00077293", color: "#28d200" },
  { label: "0.00067632", color: "#00d232" },
  { label: "0.0005797", color: "#00dca0" },
  { label: "0.00048308", color: "#00e1d2" },
  { label: "0.00038647", color: "#00dcff" },
  { label: "0.00028985", color: "#00aaff" },
  { label: "0.00019323", color: "#0069ff" },
  { label: "9.6617e-5", color: "#0014ff" },
];

const Legend = () => (
  <div className="absolute left-[11px] top-[11px] text-[7px] text-[#111]">
    <div className="leading-[11px]">
      <p className="text-[8px] font-bold leading-[12px]">B: Static Structural</p>
      <p>Total Deformation</p>
      <p>Type: Total Deformation</p>
      <p>Unit: mm</p>
      <p>Time: 1</p>
    </div>
    <div className="mt-[17px] flex items-start gap-[5px]">
      <div className="w-3 border-x border-b border-[#222]">
        {legend.map((l) => (
          <div key={l.label} className="h-3 border-t border-[#222]" style={{ background: l.color }} />
        ))}
      </div>
      <ul className="-mt-1.5 leading-[12px]">
        {legend.map((l, i) => (
          <li key={l.label} className={clsx("whitespace-nowrap", i === 0 && "text-[8px] font-bold leading-[12px]")}>
            {l.label}
          </li>
        ))}
        <li className="text-[8px] font-bold leading-[12px]">0 Min</li>
      </ul>
    </div>
  </div>
);

const silhouette =
  "M623 370C623 345 628 318 638 293C647 275 668 247 690 230C703 220 720 209 737 200C747 194 757 189 767 185C778 181 785 180 790 179C805 175 840 172 860 172C870 172 880 173 890 175C905 179 918 183 930 188C942 195 953 202 963 210C975 217 987 224 997 232C1010 244 1021 257 1030 273C1038 285 1043 298 1047 310C1052 325 1055 345 1055 360C1054 375 1052 388 1048 397C1044 415 1038 438 1030 453C1023 466 1014 480 1003 490C992 502 978 514 963 523C952 530 942 537 930 542C920 548 908 552 897 555C885 558 874 561 863 561C845 563 825 563 810 561C798 560 787 557 777 554C765 551 754 547 743 542C733 538 725 532 717 527C703 519 690 511 677 500C663 486 650 472 643 455C637 444 632 432 630 420C626 405 623 390 623 370Z";
const frontEdge =
  "M655 380C655 365 657 358 660 350C663 333 669 318 677 303C682 292 689 282 697 273C704 263 713 254 722 247C731 238 742 231 752 225C763 218 775 212 787 208C797 203 808 200 820 198C840 193 865 192 884 192C912 192 940 197 963 209L1075 200V580H800L722 530C719 528 716 526 713 523C706 517 699 511 693 503C687 496 682 487 678 477C672 466 668 454 665 440C658 425 655 405 655 380Z";
const grooveEdge =
  "M685 390C686 365 690 340 700 323C707 311 715 301 723 293C735 278 747 264 757 257C770 248 785 240 797 237C808 231 830 229 850 225C870 222 892 221 910 223C917 224 924 226 930 228C942 231 953 236 963 243C972 249 980 255 987 263C995 271 1002 280 1007 290C1014 300 1018 311 1020 323C1023 335 1025 348 1024 360C1024 380 1020 400 1013 417C1010 427 1007 435 1003 443C997 457 990 468 980 477C971 487 959 494 947 500C938 506 929 508 920 510C907 514 893 518 880 518C863 516 845 513 830 513C810 519 785 519 763 515L757 507C747 505 738 502 730 498L717 482C710 475 704 467 700 457C694 446 690 435 688 423C686 412 685 400 685 390Z";
const innerEdge =
  "M718 390C718 382 718 375 720 367C721 354 724 343 730 333C735 321 742 311 750 303C755 298 761 293 767 290C775 282 784 275 793 270C802 264 812 260 823 257C842 253 861 251 880 253C889 253 896 255 903 258C918 262 932 267 943 275C951 281 958 288 963 297C971 306 978 316 983 327C990 341 995 358 993 370C992 378 991 386 988 393C986 404 982 414 977 423C972 436 963 447 953 457C944 465 934 472 923 477C916 483 908 488 900 492C888 494 875 495 863 495C847 496 832 496 817 495C809 494 801 491 793 488C785 486 777 482 770 478C759 475 749 468 740 462C732 451 726 440 723 427C719 415 718 402 718 390Z";
const boreEdge =
  "M750 390C750 384 751 378 752 373C754 362 757 352 763 343C768 333 775 325 783 317C790 310 798 303 807 298C814 295 822 293 830 293C850 290 875 289 897 292C908 293 919 297 927 303C935 309 942 317 947 327C953 335 957 344 958 353C961 362 961 372 959 378C958 385 956 391 953 397C950 406 946 413 940 420C934 429 926 437 917 443C911 447 904 451 897 453C872 468 842 468 813 461C797 453 783 446 770 438C763 433 759 427 757 420C752 411 750 401 750 390Z";
const holeEdge =
  "M750 390C750 384 751 378 752 373C754 362 757 352 763 343C768 333 775 325 783 317C790 310 798 303 807 298C814 295 822 293 830 293C850 290 875 289 897 292C900 292 904 293 907 295C914 302 920 311 923 320C926 328 928 338 927 347C928 354 928 361 927 367C926 374 924 381 920 387C916 396 910 403 903 410C897 417 890 422 883 427C876 431 868 435 860 437C850 441 840 443 830 444C818 447 805 447 793 444C785 443 777 441 770 438C763 433 759 427 757 420C752 411 750 401 750 390Z";

// every band is a [colour, path] pair, painted in order and clipped to its surface
const rimBands = [
  ["#0b4703", "M600 160H1070V600H600z"],
  ["#455000", "M691 229L600 150H760L745 192L752 225L722 247C710 246 696 240 691 229z"],
  ["#655e00", "M737 200L730 150H780L767 185C780 195 786 200 788 209L752 226C750 212 744 204 737 200z"],
  ["#7e6600", "M757 190L750 150H800L776 183C788 188 798 195 803 203L786 209C782 200 770 190 757 190z"],
  ["#8b4200", "M776 183L770 160H830L794 179C808 183 818 190 820 199L803 203C797 192 788 186 776 183z"],
  ["#a81000", "M794 180L790 160H852V172C862 183 874 187 884 193L850 196L820 199C817 190 808 183 794 180z"],
  ["#a64b00", "M852 160H868V172C880 180 894 186 903 194H884C872 190 858 182 852 172z"],
  ["#a26b00", "M868 160H882V174C896 180 910 186 920 196H903C893 188 880 182 868 172z"],
  ["#968200", "M882 160H898V176C912 182 928 190 938 200L920 196C910 188 896 180 882 174z"],
  ["#869000", "M898 160H960L970 215L938 202C928 190 912 182 898 176z"],
];

const frontBands = [
  ["#78a000", "M600 150H1080V600H600z"],
  ["#1d9a05", "M600 190L722 247C722 262 722 275 718 284C714 298 707 312 697 330L685 390L688 424L707 456L660 500L600 480z"],
  ["#0a9a22", "M707 456C695 458 684 468 678 480L640 520H700L713 521L722 490L735 482L717 460z"],
  ["#14967c", "M724 480C716 490 711 505 708 520L700 560H740C736 535 740 515 748 500z"],
  ["#1496a2", "M748 500C740 512 735 525 733 540L740 570H768C762 550 764 530 770 512z"],
  ["#0f72ad", "M770 512C764 530 762 545 763 553L770 575H790C782 550 782 530 790 518z"],
  ["#0a46ae", "M788 515C782 530 781 545 783 556L790 575H815C803 555 803 532 810 520z"],
  ["#0412be", "M812 518C804 530 803 545 808 562L815 580H910L907 548C908 532 905 522 900 515L830 508z"],
  ["#0a46ae", "M898 514C906 525 908 540 907 552V570H935L930 543C932 528 926 515 915 508z"],
  ["#0f72ad", "M913 508C926 516 932 530 930 543L940 560L952 530C948 516 942 508 934 502z"],
  ["#1496a2", "M932 502C944 510 948 522 948 532L960 540L990 505C984 492 976 484 970 482z"],
  ["#14967c", "M968 484C978 490 986 500 986 508L1000 520L1006 490C1002 478 996 468 990 462z"],
  ["#0a9a22", "M988 462C996 470 1002 480 1002 492L1015 500L1032 455C1022 440 1012 432 1006 428z"],
  ["#1d9a05", "M1004 430C1016 436 1026 452 1027 464L1060 440L1049 397C1038 384 1028 374 1022 368z"],
  ["#0aa016", "M995 230C1004 262 1022 290 1045 304L1075 300L1030 220z"],
  ["#669a00", "M962 205C958 222 965 236 975 250L1008 290C1015 300 1030 290 1008 262C1002 250 998 240 996 228z"],
  ["#7a9e00", "M722 247L752 225C750 240 746 255 742 268L722 300L697 335C712 310 724 280 722 247z"],
  ["#98a200", "M752 225L771 213V250L742 270C747 254 750 240 752 225z"],
  ["#aa9400", "M771 213L787 207V245L770 250z"],
  ["#b87500", "M787 207L803 201V238L785 245z"],
  ["#b85000", "M803 201L820 198V232L801 240z"],
  ["#c81200", "M820 198C840 193 862 192 884 191L886 225L820 236z"],
  ["#b85000", "M884 190H903C904 205 905 215 904 226L885 225z"],
  ["#b87500", "M903 190H920C921 205 921 217 920 230L904 226z"],
  ["#aa9400", "M920 190L938 195C938 205 939 220 938 236L920 230z"],
  ["#98a200", "M938 190L962 200C962 222 966 236 975 254L938 236z"],
];

const grooveBands = [
  ["#0c4a08", "M600 200H1080V560H600z"],
  ["#8d9600", "M700 200H880V262L760 292L700 330z"],
  ["#0f7f96", "M735 476H960V540H735z"],
  ["#0a7a10", "M700 330L745 290L768 290L740 320L718 370L716 345z"],
  ["#7a9400", "M697 328L712 300L723 293L735 296L715 315L700 330z"],
  ["#8d9e00", "M748 262L775 245V282L740 300z"],
  ["#c8a200", "M772 248L806 236L808 262L772 282z"],
  ["#d88a18", "M788 244L808 238L816 258L796 266z"],
  ["#dc6a10", "M800 236H830V258H812z"],
  ["#b8930a", "M862 224H886V256H862z"],
  ["#8fa400", "M880 222H910V260H880z"],
  ["#e0c400", "M866 241L902 248V260L860 256z"],
  ["#3d4c00", "M958 236L1030 240V362L1004 358L975 290z"],
  ["#0c6408", "M994 356L1030 362L1016 420L990 450L985 400z"],
  ["#0c4a08", "M1012 355L1030 362L1018 420L990 460L1000 440L1010 410z"],
  ["#5c4a00", "M688 388L718 375L724 430L705 426z"],
  ["#344000", "M698 404L716 396L728 440L706 432z"],
  ["#0f8a4c", "M686 400L694 396L704 424L690 428z"],
  ["#0f9068", "M715 478L735 470L752 490L730 500z"],
  ["#1690a4", "M732 482L765 484V498L738 494z"],
  ["#0f72ad", "M752 480L775 478L770 512L750 510z"],
  ["#0a46ae", "M812 494H905V520H812z"],
  ["#0e808c", "M905 490L1000 440L1012 455L950 520H905z"],
  ["#1496a2", "M916 474L985 430L996 446L950 494L912 508z"],
  ["#0f8a4c", "M950 450L1010 415L1004 446L984 470z"],
];

const innerBands = [
  ["#78a000", "M700 240H1020V510H700z"],
  ["#1d9a05", "M767 289C767 310 760 340 748 356C740 366 730 372 722 376H700V330L745 295z"],
  ["#6e9200", "M767 289L784 276C784 300 778 322 768 340L748 362C762 340 768 315 767 289z"],
  ["#98a200", "M777 282L792 270V312L777 326z"],
  ["#aa9400", "M792 270L810 262V298L792 312z"],
  ["#b87500", "M810 262L824 256V296L810 300z"],
  ["#b85000", "M824 250H881L884 292L824 295z"],
  ["#b87500", "M881 250L898 254L901 295L884 292z"],
  ["#aa9400", "M898 254L912 259L920 302L900 295z"],
  ["#98a200", "M912 259L927 266C930 285 936 300 942 318L918 302z"],
  ["#0f9f12", "M944 274C950 300 963 320 985 330L975 300L960 282z"],
  ["#1d9a05", "M752 394C738 402 728 415 724 428L740 464L757 440L765 425z"],
  ["#0a9a22", "M757 420C748 430 740 445 738 462L756 474L772 438z"],
  ["#14967c", "M770 437C762 446 758 458 757 472L768 480L784 446z"],
  ["#1496a2", "M780 440C774 452 768 465 768 480L796 492L804 455z"],
  ["#0f72ad", "M802 452C796 466 795 478 796 492L815 498L816 460z"],
  ["#0a46ae", "M814 458C812 470 813 485 816 500H895C900 485 900 465 896 450z"],
  ["#0f72ad", "M894 450C900 462 900 478 893 496L915 486C918 470 914 455 912 444z"],
  ["#1496a2", "M910 444C917 458 918 472 913 486L948 462C946 445 940 432 933 425z"],
  ["#14967c", "M931 424C940 434 946 448 946 463L960 455C957 435 950 420 944 414z"],
  ["#1d9a05", "M944 410C952 424 956 440 956 456L985 412C974 396 964 386 956 382z"],
];

const boreBands = [
  ["#304300", "M880 280H970V400H880z"],
  ["#0a4202", "M915 360C930 364 948 374 965 386L945 430L880 420z"],
  ["#045a24", "M912 394C925 402 940 408 955 412L930 450L890 420z"],
  ["#0a7a78", "M900 410C915 420 930 428 940 432L915 450L850 440z"],
  ["#0c88a0", "M880 426C895 432 912 438 925 446L900 460L850 440z"],
  ["#0b66a8", "M862 434C878 438 896 446 906 452L880 470L840 440z"],
  ["#0748b4", "M740 430L858 436C872 440 890 448 898 456L860 475H790z"],
];

const rollers = [
  { id: "top", d: "M807 232C818 229 845 226 866 223C872 228 871 236 868 243C865 249 862 252 860 254C846 254 832 255 819 257C811 250 807 242 807 232Z", light: "#fb0d00", dark: "#500400" },
  { id: "topRight", d: "M909 225C925 226 950 236 962 245C963 253 961 262 957 267C954 272 950 275 945 275C930 268 915 262 903 255C900 244 902 233 909 225Z", light: "#86a800", dark: "#24580c" },
  { id: "right", d: "M972 299C985 293 1000 297 1007 303C1013 314 1016 330 1013 343C1011 350 1007 355 1003 357H991C990 335 985 315 972 299Z", light: "#86ac00", dark: "#466000" },
  { id: "topLeft", d: "M722 292C733 277 752 262 770 248C775 256 774 268 770 277C766 286 762 290 757 294C745 297 735 296 726 295Z", light: "#88b40a", dark: "#3c5800" },
  { id: "left", d: "M697 328C704 329 710 332 716 347C718 362 714 378 710 386L686 388C688 366 692 345 697 328Z", light: "#0fae1c", dark: "#054a08" },
  { id: "lowerLeft", d: "M692 430C698 425 705 423 712 424C722 425 727 433 730 440C736 450 739 456 739 462C738 470 737 476 733 478C728 481 724 482 720 481C708 468 698 450 692 430Z", light: "#08a02e", dark: "#055c1c" },
  { id: "bottomLeft", d: "M770 479C784 486 802 491 822 496V512C819 519 815 525 810 526C793 524 778 520 764 514C760 503 763 490 770 479Z", light: "#0a5ec8", dark: "#04286c" },
  { id: "bottomRight", d: "M862 497C884 494 906 488 922 477C923 490 920 502 913 510C900 518 884 520 876 516C870 512 865 505 862 497Z", light: "#0a54c4", dark: "#05306e" },
  { id: "lowerRight", d: "M986 400C993 403 997 407 999 415C1001 430 998 440 990 449C980 458 966 458 953 455C966 448 975 438 979 426C981 416 983 408 986 400Z", light: "#08ac30", dark: "#045214" },
];

const gaps = [
  "M866 222L911 222L907 228L885 225L869 228z",
  "M869 238L903 236V250C894 244 884 242 869 240z",
  "M962 246C972 254 982 270 984 294C978 280 968 272 958 267z",
  "M945 275L953 273C962 280 970 290 974 296L971 300C963 292 954 282 945 275z",
  "M739 461C750 468 760 474 770 478L767 485L734 476z",
  "M717 482L727 481L738 490L763 495V508L737 500z",
  "M822 497H858C850 500 840 502 822 503z",
  "M686 408L693 428L688 423z",
];

const surfaces = [
  { id: "rim", clip: silhouette, bands: rimBands },
  { id: "front", clip: frontEdge, bands: frontBands },
  { id: "groove", clip: grooveEdge, bands: grooveBands },
  { id: "inner", clip: innerEdge, bands: innerBands },
  { id: "bore", clip: boreEdge, bands: boreBands },
];

const BearingModel = () => (
  <svg
    viewBox="616 160 448 408"
    className="absolute left-[280px] top-[45px] h-[408px] w-[448px]"
    role="img"
    aria-label="Total deformation of the bearing"
  >
    <defs>
      <clipPath id="clip-body">
        <path d={silhouette} />
      </clipPath>
      {surfaces.map((s) => (
        <clipPath key={s.id} id={`clip-${s.id}`}>
          <path d={s.clip} />
        </clipPath>
      ))}
      {rollers.map((r) => (
        <linearGradient key={r.id} id={`roller-${r.id}`} x1="1" y1="0" x2=".3" y2="1">
          <stop offset=".1" stopColor={r.light} />
          <stop offset="1" stopColor={r.dark} />
        </linearGradient>
      ))}
    </defs>
    <g clipPath="url(#clip-body)">
      {surfaces.map((s) => (
        <g key={s.id} clipPath={`url(#clip-${s.id})`}>
          {s.bands.map(([fill, d], i) => (
            <path key={i} d={d} fill={fill} />
          ))}
        </g>
      ))}
      {gaps.map((d) => (
        <path key={d} d={d} fill="#fff" />
      ))}
      <path d="M953 275C962 280 970 290 974 298L984 297C979 284 968 272 958 267z" fill="#4f9410" />
      {rollers.map((r) => (
        <path key={r.id} d={r.d} fill={`url(#roller-${r.id})`} />
      ))}
      <path d={holeEdge} fill="#fff" />
    </g>
    <path
      d="M729 290C742 284 758 270 766 251M990 315C993 330 995 345 993 356"
      fill="none"
      stroke="#2f4800"
      strokeWidth=".7"
    />
    <path d="M791.500 166.500H814L819 173L814 180.500H791.500z" fill="#e8200c" stroke="#901000" />
    <path d="M818 172h3v3h-3z" fill="#111" />
    <text x="794" y="176" fontSize="7" fill="#ffd9d0">
      Max
    </text>
    <g fill="#111" stroke="#fff" strokeWidth=".8">
      <path d="M675 351V360H684L681 357C684 354 688 355 691 358C690 352 683 349 678 354z" />
      <path d="M692 371V362H683L686 365C684 368 680 367 677 364C677 371 685 373 689 368z" />
    </g>
  </svg>
);

const Triad = () => (
  <svg viewBox="0 0 96 76" className="absolute bottom-0 right-[34px] h-[76px] w-24" aria-label="Axes">
    <path d="M66 9L28 13" stroke="#18b4c4" strokeWidth="3" />
    <path d="M16 14L29 7V19z" fill="#0fa7b8" />
    <path d="M66 9V50" stroke="#0a18a0" strokeWidth="3" />
    <path d="M61 46H71L66 60z" fill="#0a18a0" />
    <path d="M66 9L76 15" stroke="#a01808" strokeWidth="3" />
    <circle cx="80" cy="17" r="5" fill="#cf1b08" />
    <circle cx="51" cy="42" r="5" fill="#cf1b08" />
    <path d="M62 6H70V13H62z" fill="#0d2b6e" />
    <g fontSize="7">
      <text x="5" y="16" fill="#15a36a">Y</text>
      <text x="88" y="23" fill="#c23020">X</text>
      <text x="66" y="71" fill="#2030b0">Z</text>
    </g>
  </svg>
);

const ScaleRuler = () => (
  <div className="absolute left-[342px] top-[432px] text-[7px] leading-[10px] text-[#111]">
    <div className="flex w-[340px] justify-between">
      <span>0.00</span>
      <span className="pl-[18px] text-[#081060]">30.00</span>
      <span>60.00 (mm)</span>
    </div>
    <div className="ml-[7px] flex h-[9px] w-[305px] border border-black bg-white">
      <div className="flex-1 bg-black" />
      <div className="flex-1" />
      <div className="flex-1 bg-black" />
      <div className="flex-1" />
    </div>
    <div className="ml-[7px] mt-1 flex w-[305px] justify-around">
      <span>15.00</span>
      <span>45.00</span>
    </div>
  </div>
);

const Viewport = () => (
  <main className="relative min-h-0 flex-1 overflow-hidden bg-white">
    <Legend />
    <BearingModel />
    <ScaleRuler />
    <Triad />
  </main>
);

const GraphPanel = () => (
  <section className="flex w-[511px] shrink-0 flex-col bg-white">
    <PanelHeader title="Graph" />
    <div className="flex h-[19px] shrink-0 items-center bg-[#eeeef1] text-[#333]">
      <div className="ml-[6px] h-3 w-1 border-x border-dotted border-[#c4c4c4]" />
      <span className="ml-2 w-[46px]">Animation</span>
      <div className="flex w-[58px] items-center justify-between">
        <IconButton icon="first" label="Previous frame" />
        <IconButton icon="play" label="Play" />
        <IconButton icon="stop" label="Stop" active />
        <IconButton icon="last" label="Next frame" />
      </div>
      <div className="ml-1 flex items-center">
        <IconButton icon="distributed" label="Distributed" active />
        <IconButton icon="resultSets" label="Result sets" />
      </div>
      <Dropdown label="Frames" options={["20 Frames"]} className="ml-[6px] h-4 w-[70px] text-[9px]" />
      <Dropdown label="Duration" options={["2 Sec (Auto)"]} className="h-4 w-[70px] text-[9px]" />
      <div className="ml-[6px]">
        <IconButton icon="exportVideo" label="Export video" />
      </div>
      <div className="ml-[6px] flex w-[45px] justify-between">
        <IconButton icon="zoom" label="Zoom to fit" />
        <IconButton icon="palette" label="Update contour range" />
        <IconButton icon="magicTool" label="Options" />
      </div>
      <div className="ml-[6px] flex w-[29px] justify-between">
        <IconButton icon="rows" label="Rows" />
        <IconButton icon="rows" label="Columns" />
      </div>
      <div className="ml-[6px]">
        <IconButton icon="cycles" label="Cycles" />
      </div>
      <input
        aria-label="Cycle count"
        defaultValue="3 Cycles"
        disabled
        className="h-[15px] w-[42px] border border-[#d6d6d6] bg-[#f4f4f6] pl-0.5 text-[#a3a3a3]"
      />
      <Caret className="ml-0.5 mt-1.5" />
    </div>
    <div className="flex flex-1 pl-4 pr-[17px] pt-4 font-bold text-[#222]">
      <div className="h-[27px] w-[19px] rotate-180 text-center text-[10px] leading-[14px] [writing-mode:vertical-rl]">
        [mm]
      </div>
      <div className="flex-1">
        <div className="flex h-[29px] justify-between border border-[#b8b8b8]">
          <div className="-my-px -ml-[2px] flex w-[3px] flex-col justify-between">
            <span className="h-[3px] bg-[#173f34]" />
            <span className="h-[3px] bg-[#222]" />
            <span className="h-[3px] bg-[#a02020]" />
          </div>
        </div>
        <div className="flex h-1 justify-between">
          {Array.from({ length: 11 }, (_, i) => (
            <span key={i} className="w-px bg-[#b8b8b8]" />
          ))}
        </div>
        <p className="mt-2.5 text-center leading-[12px]">[s]</p>
        <div className="mt-1 h-[10px] border border-[#a8a8a8]" />
      </div>
    </div>
  </section>
);

const columns = [
  { name: "Minimum [mm]", value: "0.", color: "text-[#b02a2a]" },
  { name: "Maximum [mm]", value: "1.3526e-003", color: "text-[#1c8c3c]" },
  { name: "Average [mm]", value: "6.8627e-004", color: "text-[#2430c0]" },
];

const TabularPanel = () => (
  <section className="flex min-w-0 flex-1 flex-col bg-[#a0a0a0]">
    <PanelHeader title="Tabular Data" />
    <table className="w-[272px] table-fixed border-collapse self-start bg-white text-[#222]">
      <colgroup>
        <col className="w-[11px]" />
        <col className="w-[35px]" />
        <col className="w-[77px]" />
        <col className="w-[77px]" />
        <col />
      </colgroup>
      <thead>
        <tr className="h-[13px] bg-[#f3f3f3]">
          <th className="border border-[#c8c8c8] p-0" />
          <th className="border border-[#c8c8c8] p-0 font-normal">Time [s]</th>
          {columns.map((c) => (
            <th key={c.name} className="border border-[#c8c8c8] p-0 font-normal">
              <label className={clsx("flex items-center gap-[3px] whitespace-nowrap pl-0.5", c.color)}>
                <CheckBox checked />
                {c.name}
              </label>
            </th>
          ))}
        </tr>
      </thead>
      <tbody>
        <tr className="h-[13px]">
          <td className="border border-[#c8c8c8] p-0 text-center">1</td>
          <td className="border border-[#c8c8c8] py-0 pl-0.5">1.</td>
          {columns.map((c) => (
            <td key={c.name} className="border border-[#c8c8c8] bg-[#e7e6e3] py-0 pl-0.5">
              {c.value}
            </td>
          ))}
        </tr>
      </tbody>
    </table>
  </section>
);

const App = () => (
  <div className="flex h-screen flex-col overflow-hidden bg-[#eeeef1] font-['Noto_Sans','Open_Sans',sans-serif] text-[8px] leading-[12px]">
    <TitleBar />
    <TabBar />
    <Ribbon />
    <div className="flex min-h-0 flex-1 pt-px">
      <aside className="flex w-[333px] shrink-0 flex-col">
        <OutlinePanel />
        <DetailsPanel />
      </aside>
      <div className="ml-[3px] flex min-w-0 flex-1 flex-col">
        <ViewToolbar />
        <Viewport />
        <div className="mt-[3px] flex h-[124px] shrink-0 gap-0.5">
          <GraphPanel />
          <TabularPanel />
        </div>
      </div>
    </div>
  </div>
);

export default App;
